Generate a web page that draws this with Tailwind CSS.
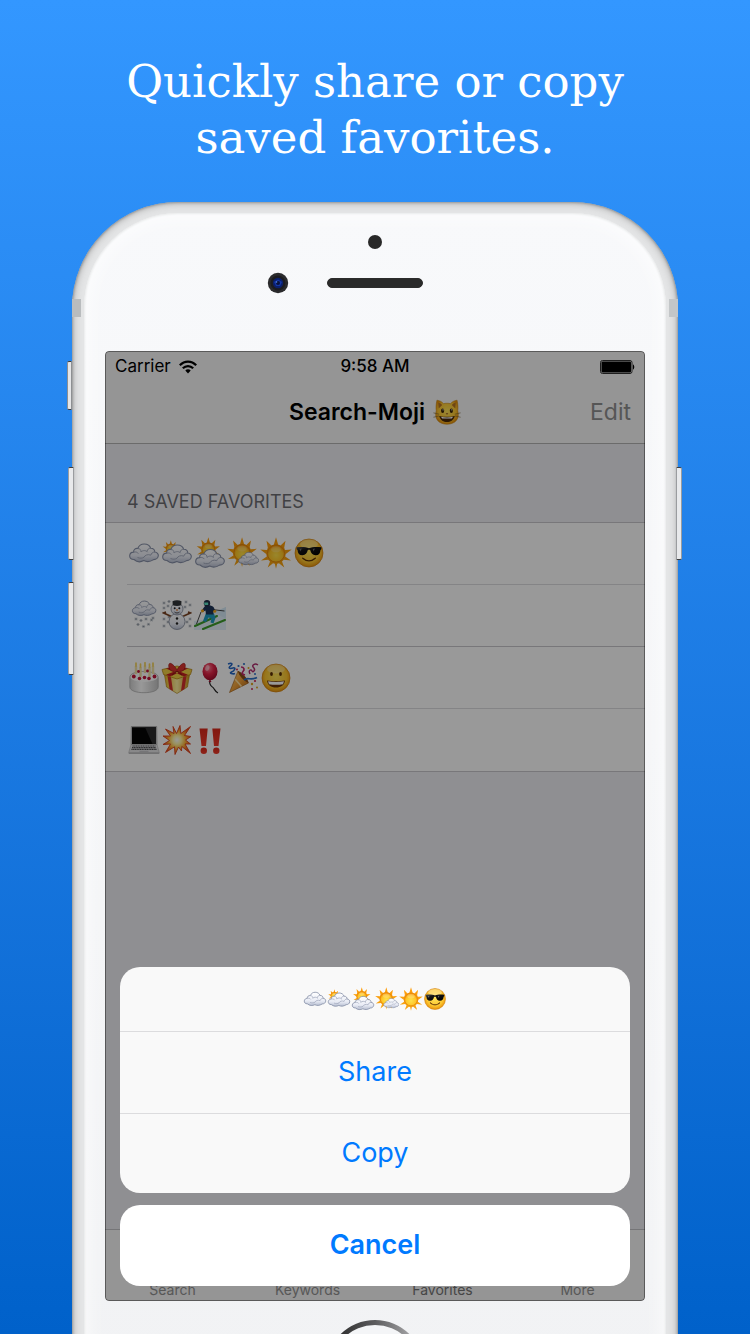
<!DOCTYPE html>
<html lang="en">
<head>
<meta charset="utf-8">
<meta name="viewport" content="width=device-width, initial-scale=1">
<title>Search-Moji</title>
<script src="https://cdn.jsdelivr.net/npm/@tailwindcss/browser@4"></script>
</head>
<body class="font-['Inter','Liberation_Sans',sans-serif]">

<!-- Shared emoji drawings -->
<svg class="absolute h-0 w-0" aria-hidden="true">
  <defs>
    <linearGradient id="gCloud" x1="0" y1="0" x2="0" y2="1"><stop offset="0" stop-color="#ffffff"/><stop offset=".65" stop-color="#e9ecf5"/><stop offset="1" stop-color="#b9c0d3"/></linearGradient>
    <radialGradient id="gSun" cx=".5" cy=".6" r=".55"><stop offset="0" stop-color="#ffe14a"/><stop offset=".7" stop-color="#ffc526"/><stop offset="1" stop-color="#f3920d"/></radialGradient>
    <linearGradient id="gRay" x1="0" y1="0" x2="0" y2="1"><stop offset="0" stop-color="#ff9d0a"/><stop offset="1" stop-color="#f5a413"/></linearGradient>
    <radialGradient id="gFace" cx=".5" cy=".45" r=".55"><stop offset="0" stop-color="#ffe45a"/><stop offset=".7" stop-color="#fdc62f"/><stop offset="1" stop-color="#e8920c"/></radialGradient>
    <linearGradient id="gLens" x1="0" y1="0" x2="1" y2="1"><stop offset="0" stop-color="#555"/><stop offset=".3" stop-color="#161616"/><stop offset="1" stop-color="#000"/></linearGradient>
    <linearGradient id="gBox" x1="0" y1="0" x2="1" y2="0"><stop offset="0" stop-color="#e6b41e"/><stop offset=".5" stop-color="#fff0a0"/><stop offset="1" stop-color="#c98d10"/></linearGradient>
    <radialGradient id="gBalloon" cx=".4" cy=".3" r=".7"><stop offset="0" stop-color="#ff7d93"/><stop offset=".5" stop-color="#e02447"/><stop offset="1" stop-color="#a30c2c"/></radialGradient>
    <linearGradient id="gCone" x1="0" y1="0" x2="1" y2="1"><stop offset="0" stop-color="#ffd47a"/><stop offset=".5" stop-color="#f2a23a"/><stop offset="1" stop-color="#a75d10"/></linearGradient>
    <radialGradient id="gBoom" cx=".5" cy=".5" r=".5"><stop offset="0" stop-color="#fff"/><stop offset=".3" stop-color="#fff3a0"/><stop offset=".6" stop-color="#ffb437"/><stop offset="1" stop-color="#e8501c"/></radialGradient>
    <linearGradient id="gBang" x1="0" y1="0" x2="0" y2="1"><stop offset="0" stop-color="#d92a1c"/><stop offset="1" stop-color="#ef3b2b"/></linearGradient>
    <linearGradient id="gCake" x1="0" y1="0" x2="1" y2="0"><stop offset="0" stop-color="#cfcfcf"/><stop offset=".4" stop-color="#fff"/><stop offset="1" stop-color="#c4c4c4"/></linearGradient>

    <g id="cloudShape">
      <path d="M6 23.500C2.800 23.500 1.500 21.500 1.700 19.600 1.900 17.400 3.700 16.200 5.600 16.100 5.400 13.600 7.600 12 9.800 12.500 10.900 9.500 13.300 8 16.200 8 19.400 8 21.900 9.600 22.600 12.200 25.400 12.100 27 14 26.700 16 29.200 16.200 30.500 17.900 30.300 19.800 30 22.300 28.100 23.500 25.600 23.600 22 26 18.400 26 15.800 24.600 12.800 26.200 8.700 26 6 23.500Z" fill="url(#gCloud)" stroke="#8790a8" stroke-width="1.100"/>
      <path d="M5.600 16.100C8 15.600 9.500 16.300 10.300 17.600M9.800 12.500C12 12.500 13.200 14 13 16M13 16C14.600 14.200 18 14 19.600 16.200M22.600 12.200C20.600 12.200 19.300 13.500 19.200 15.400M26.700 16C24.600 16 23.300 17.500 22.800 19.200 20 18 17 19 16 21.200M9.500 21.500C12 22.600 14.500 22.300 16 21.200" fill="none" stroke="#a3aabd" stroke-width="1"/>
    </g>
    <g id="sunShape">
      <path d="M16 .300 18.200 7.800 20.600 8.600 25.500 3.800 24.200 10.700 25 13 31.700 12.600 25.800 17 25.200 19.600 31 23.500 23.800 22.800 22 24.600 24.300 30.500 19 26.200 17.200 26.700 16 31.800 14.800 26.700 13 26.200 7.700 30.500 10 24.600 8.200 22.800 1 23.500 6.800 19.600 6.200 17 .300 12.600 7 13 7.800 10.700 6.500 3.800 11.400 8.600 13.800 7.800Z" fill="url(#gRay)"/>
      <circle cx="16" cy="16.500" r="8.600" fill="url(#gSun)" stroke="#e0830a" stroke-width=".9"/>
      <ellipse cx="16" cy="12.300" rx="5" ry="3" fill="#fff" opacity=".2"/>
    </g>
    <path id="flake" d="M-1.600 0H1.600M-.800-1.400.800 1.400M.800-1.400-.800 1.400" stroke="#77808f" stroke-width=".5" fill="none"/>

    <symbol id="e-cloud" viewBox="0 0 32 32"><use href="#cloudShape" transform="translate(0 -1)"/></symbol>
    <symbol id="e-cloud-sun" viewBox="0 0 32 32"><use href="#sunShape" transform="translate(1.500 3) scale(.52)"/><use href="#cloudShape"/></symbol>
    <symbol id="e-sun-cloud" viewBox="0 0 32 32"><use href="#sunShape" transform="translate(2.500 0) scale(.74)"/><use href="#cloudShape" transform="translate(0 4.500)"/></symbol>
    <symbol id="e-sun-small-cloud" viewBox="0 0 32 32"><use href="#sunShape" transform="translate(0 0) scale(.94)"/><use href="#cloudShape" transform="translate(10.500 9.700) scale(.7)"/></symbol>
    <symbol id="e-sun" viewBox="0 0 32 32"><use href="#sunShape"/></symbol>
    <symbol id="e-cool" viewBox="0 0 32 32">
      <circle cx="16" cy="16" r="14" fill="url(#gFace)" stroke="#cf7d0a" stroke-width=".7"/>
      <ellipse cx="16" cy="7" rx="9" ry="4.500" fill="#fff" opacity=".3"/>
      <path d="M3.500 10.300C8 9.600 13 9.800 16 11.200 19 9.800 24 9.600 28.500 10.300L28.300 12.300 27.500 13C27.200 16.500 25.800 18.200 22.600 18.200 19.400 18.200 18 16.300 17.300 13.300 16.500 12.700 15.500 12.700 14.700 13.300 14 16.300 12.600 18.200 9.400 18.200 6.200 18.200 4.800 16.500 4.500 13L3.700 12.300Z" fill="url(#gLens)"/>
      <path d="M6.500 12 8.700 11.500 7.500 14.500ZM19.800 12 22 11.500 20.500 14.500Z" fill="#8a8a8a" opacity=".7"/>
      <path d="M10.500 21.700C13.500 24.600 18.500 24.600 21.500 21.700M9.700 21.200l1.400.9M22.300 21.200l-1.400.9" fill="none" stroke="#5b3006" stroke-width="1.300" stroke-linecap="round"/>
    </symbol>
    <symbol id="e-snow" viewBox="0 0 32 32">
      <use href="#cloudShape" transform="translate(3 -4.500) scale(.82)"/>
      <use href="#flake" x="8" y="20"/><use href="#flake" x="13" y="21.500"/><use href="#flake" x="18" y="20"/><use href="#flake" x="23.500" y="21"/><use href="#flake" x="10" y="25.500"/><use href="#flake" x="15.500" y="27.500"/><use href="#flake" x="20.500" y="25.300"/><use href="#flake" x="25" y="19"/>
    </symbol>
    <symbol id="e-snowman" viewBox="0 0 32 32">
      <use href="#flake" x="3" y="4"/><use href="#flake" x="7" y="7"/><use href="#flake" x="8" y="2.500"/><use href="#flake" x="25" y="3"/><use href="#flake" x="29" y="6"/><use href="#flake" x="24" y="8"/><use href="#flake" x="3" y="20"/><use href="#flake" x="7" y="23"/><use href="#flake" x="3" y="27"/><use href="#flake" x="29" y="20"/><use href="#flake" x="26" y="23"/><use href="#flake" x="29" y="27"/><use href="#flake" x="3" y="9"/><use href="#flake" x="8" y="18"/>
      <path d="M11.500 18 1.500 13.500M4 12.500l.5 2.500M20.500 18 30.500 13.500M28 12.500l-.5 2.500" stroke="#7a4424" stroke-width="1.800" fill="none"/>
      <circle cx="16" cy="22.500" r="8" fill="url(#gCloud)" stroke="#8b92a2" stroke-width=".9"/>
      <circle cx="16" cy="10" r="6" fill="url(#gCloud)" stroke="#8b92a2" stroke-width=".9"/>
      <path d="M11.500 2.300C14 1 18 1 20.500 2.300L20.200 6.200C17.500 7.200 14.500 7.200 11.800 6.200Z" fill="#33363a"/>
      <circle cx="13.700" cy="9.300" r="1" fill="#222"/><circle cx="18.300" cy="9.300" r="1" fill="#222"/>
      <path d="M16 10v2" stroke="#e26a13" stroke-width="1.100"/><path d="M13.500 13C15 14.300 17 14.300 18.500 13" stroke="#333" stroke-width=".8" fill="none"/>
      <circle cx="16" cy="19.500" r="1.200" fill="#222"/><circle cx="16" cy="24.500" r="1.200" fill="#222"/>
    </symbol>
    <symbol id="e-skier" viewBox="0 0 32 32">
      <path d="M0 22 12 20.500 20 14 32 8V31H0Z" fill="#e3f1fa"/><path d="M20 13 32 8V20Z" fill="#d5eaf7"/>
      <path d="M1 27 23 17M9 30 31 21" stroke="#3d9b2b" stroke-width="2" stroke-linecap="round"/>
      <path d="M18 10.500 30.500 12M7 13 2.500 25" stroke="#333" stroke-width=".9"/>
      <path d="M12 14 20 14.500 21.500 19 19.500 24.500 16.500 23.500 17.500 19.500 14.500 18.500 12 23 9 22Z" fill="#1f9cc4"/>
      <path d="M11 7C13 5.500 17.500 6 19.500 8L21.500 12 19.500 12.500 19.500 15.500 12 15.500 11.500 11.500 9.500 12.500 8 11Z" fill="#1f3458"/>
      <circle cx="13" cy="4.200" r="3.200" fill="#202d47"/><path d="M10 3.600h4.200v2.500H10.500Z" fill="#5cdcc0"/>
      <circle cx="8.500" cy="11.800" r="1.600" fill="#efa41b"/><circle cx="20.700" cy="12.200" r="1.500" fill="#efa41b"/>
    </symbol>
    <symbol id="e-cake" viewBox="0 0 32 32">
      <path d="M1.800 15.500C1.800 11.500 8 9.500 16 9.500S30.200 11.500 30.200 15.500V25C30.200 28.500 24 30.700 16 30.700S1.800 28.500 1.800 25Z" fill="url(#gCake)" stroke="#a8a8a8" stroke-width=".7"/>
      <ellipse cx="16" cy="15" rx="13.500" ry="5" fill="#fff"/>
      <path d="M8 4V12M12.500 5V15M17 3.500V11M21.500 5V15M25 4V12" stroke="#f1e1a6" stroke-width="2.400"/>
      <path d="M8 1.200V4M12.500 2V5M17 .800V4M21.500 2V5M25 1.200V4" stroke="#f5d35c" stroke-width="1.700" stroke-linecap="round"/>
      <g fill="#c2143a"><circle cx="5.800" cy="14.500" r="1.900"/><circle cx="11.500" cy="16.500" r="1.800"/><circle cx="16.500" cy="15.500" r="1.800"/><circle cx="21" cy="16.500" r="1.800"/><circle cx="26.500" cy="14.500" r="1.900"/><circle cx="10.500" cy="9.500" r="1.400"/><circle cx="19.500" cy="9" r="1.400"/></g>
    </symbol>
    <symbol id="e-gift" viewBox="0 0 32 32">
      <path d="M3 10 16 14 29 10 26.500 25 16 31.500 5.500 25Z" fill="url(#gBox)" stroke="#a87a10" stroke-width=".6"/>
      <path d="M1 7.500 16 4 31 7.500 29.500 12.500 16 17 2.500 12.500Z" fill="#f1cf45" stroke="#ad7c10" stroke-width=".7"/>
      <path d="M6.500 14 10 15.200 12 29 8.500 27ZM25.500 14 22 15.200 20 29 23.500 27Z" fill="#d3302c"/>
      <path d="M5 6.600 9 5.700 27 12.800 23 14.500ZM27 6.600 23 5.700 5 12.800 9 14.500Z" fill="#c4211f"/>
      <path d="M16 8C13 2.500 9 0 8 2 7 4.500 8.500 7.500 10.500 9L16 9.500 21.500 9C23.500 7.500 25 4.500 24 2 23 0 19 2.500 16 8Z" fill="#dd3530" stroke="#931414" stroke-width=".6"/>
      <path d="M16 9 11 13M16 9 21 13" stroke="#981818" stroke-width="1.300"/>
    </symbol>
    <symbol id="e-balloon" viewBox="0 0 32 32">
      <path d="M16 18.500C14.500 23 17.500 24 19.500 26 21 28 21.500 30 24 31" fill="none" stroke="#222" stroke-width="1.200"/>
      <ellipse cx="16" cy="9.500" rx="7.500" ry="8.700" fill="url(#gBalloon)"/><path d="M14.500 20 16 17.500 17.500 20Z" fill="#a30c2c"/>
      <ellipse cx="13.300" cy="6" rx="2" ry="3" fill="#fff" opacity=".45" transform="rotate(20 13.300 6)"/>
    </symbol>
    <symbol id="e-party" viewBox="0 0 32 32">
      <path d="M11 9 2.500 30.500 21.500 21Z" fill="url(#gCone)" stroke="#9c5a16" stroke-width=".6"/>
      <path d="M11 9C14 9.500 21.500 17 21.500 21 18 20 11 13 11 9Z" fill="#8a4b16"/><path d="M8 17 14.500 24.500" stroke="#ffe1a0" stroke-width="1.600"/>
      <path d="M1 2C5 .5 6 2 3.500 4S2.500 7 6 6 7.500 9 4.500 10 6 12.500 8 11.500" fill="none" stroke="#2567c4" stroke-width="1.600"/>
      <path d="M14 5C17 5 18 7.500 16 9.500S16 12.500 18 13" fill="none" stroke="#c1276d" stroke-width="1.700"/>
      <path d="M23 12C21 8 24 7 25 9S29 8 26.500 5.500 28 1 31 3" fill="none" stroke="#b0306f" stroke-width="1.500"/>
      <path d="M17 18C21 14.500 23 19 30 15.500" fill="none" stroke="#2d72c8" stroke-width="1.700"/>
      <g fill="#2d72c8"><circle cx="11.500" cy="4" r="1.100"/><circle cx="17" cy="2" r="1.100"/><circle cx="28" cy="12" r="1"/></g><g fill="#cf2b55"><circle cx="28" cy="19" r="1.100"/><circle cx="25" cy="27" r="1"/><circle cx="10" cy="7.500" r="1"/></g><g fill="#e0a722"><circle cx="25" cy="22" r="1.200"/><circle cx="30" cy="25.500" r="1"/><circle cx="21.500" cy="6" r="1"/></g>
    </symbol>
    <symbol id="e-grin" viewBox="0 0 32 32">
      <circle cx="16" cy="16" r="14" fill="url(#gFace)" stroke="#cf7d0a" stroke-width=".7"/>
      <ellipse cx="16" cy="7" rx="9" ry="4.500" fill="#fff" opacity=".3"/>
      <ellipse cx="11.500" cy="12" rx="1.400" ry="2" fill="#5b3006"/><ellipse cx="20.500" cy="12" rx="1.400" ry="2" fill="#5b3006"/>
      <path d="M7 18.500C12 19.500 20 19.500 25 18.500 24.500 23 21 25.500 16 25.500S7.500 23 7 18.500Z" fill="#6b3409"/>
      <path d="M8 19.300C13 20.300 19 20.300 24 19.300L23 22.200C18.500 23 13.500 23 9 22.200Z" fill="#fff"/>
    </symbol>
    <symbol id="e-laptop" viewBox="0 0 32 32">
      <path d="M3.300 2.500H28.700L29 20.500H3Z" fill="#d7d7d9" stroke="#777" stroke-width=".5"/><path d="M4 3.200H28V20H4Z" fill="#060606"/><path d="M17 3.200H28V20H24.500Z" fill="#2a2a2c"/>
      <path d="M3 20.500H29L31.300 28.500H.7Z" fill="#e3e3e5" stroke="#999" stroke-width=".4"/><path d="M4.500 22H27.500M4 23.700H28M3.400 25.400H28.600" stroke="#4d4d50" stroke-width="1.200" stroke-dasharray="1.300 .4"/><path d="M11.500 26.800H20.500V28.500H11.500Z" fill="#c5c5c8"/><path d="M.7 28.500H31.300V30H.7Z" fill="#bcbcbf"/>
    </symbol>
    <symbol id="e-boom" viewBox="0 0 32 32">
      <path d="M15.500 9.500 19 1.500 19.800 9.500 29.500 2.500 23.500 11.500 30 12.500 24.500 16 29.500 20 24 20 29.500 29.500 20.800 22.500 20.500 27 17.500 23 14 30.500 13.500 22.800 4.500 28.500 9.500 20 2 20.500 8.500 16.500 2 12 9.500 12 4.500 5 13 9.500 12 2.500Z" fill="url(#gBoom)" stroke="#d9401c" stroke-width=".9"/>
    </symbol>
    <symbol id="e-bang" viewBox="0 0 32 32">
      <g fill="url(#gBang)"><path d="M5.500 4.500H13.700L12 22H7.500ZM18.300 4.500H26.500L24.500 22H20Z"/><circle cx="9.800" cy="26.800" r="3.200"/><circle cx="22.300" cy="26.800" r="3.200"/></g>
    </symbol>
    <symbol id="e-cat" viewBox="0 0 32 32">
      <path d="M4.500 2.500C8 3 10.500 4.500 12 6.500 14.500 5.800 17.500 5.800 20 6.500 21.500 4.500 24 3 27.500 2.500 28.500 7 28.800 11 28.300 14.500 31 24 25 30 16 30S1 24 3.700 14.500C3.200 11 3.500 7 4.500 2.500Z" fill="url(#gFace)" stroke="#c2800e" stroke-width=".6"/>
      <path d="M6 5C8 5.500 9.500 6.500 10.500 8L6.500 12ZM26 5C24 5.500 22.500 6.500 21.500 8L25.500 12Z" fill="#b87424"/>
      <ellipse cx="11" cy="14.500" rx="1.800" ry="2.600" fill="#3a2505"/><ellipse cx="21" cy="14.500" rx="1.800" ry="2.600" fill="#3a2505"/><circle cx="11.500" cy="13.500" r=".7" fill="#fff"/><circle cx="21.500" cy="13.500" r=".7" fill="#fff"/>
      <path d="M14.500 17.300H17.500L16 19.200Z" fill="#8a4c20"/>
      <path d="M7 20.500C12 21.800 20 21.800 25 20.500 23.500 25.500 20 27.500 16 27.500S8.500 25.500 7 20.500Z" fill="#4a2908"/><path d="M9 21.500C13 22.400 19 22.400 23 21.500L21.500 23.400H10.500Z" fill="#fff"/>
      <path d="M7 18.500.5 17M7 20.500.5 22M25 18.500 31.500 17M25 20.500 31.500 22" stroke="#7b6330" stroke-width=".7"/>
    </symbol>
  </defs>
</svg>

<main class="flex h-screen flex-col overflow-hidden bg-linear-to-b from-[#3397ff] to-[#0061ca] px-[72px] pt-[54px]">
  <h1 class="-mx-8 h-[148px] shrink-0 text-center font-['DejaVu_Serif',serif] text-[45px] leading-[56px] text-white">Quickly share or copy<br>saved favorites.</h1>

  <!-- Phone -->
  <div class="relative w-full shrink-0 rounded-t-[106px] bg-[#e4e5e6] px-3 pt-[11px] shadow-[inset_0_0_3px_#777,inset_0_0_9px_#999]">
    <!-- Antenna bands -->
    <div class="absolute top-[97px] left-0 h-[18px] w-[9px] bg-[#b9bcbe]"></div>
    <div class="absolute top-[97px] right-0 h-[18px] w-[9px] bg-[#c3c6c8]"></div>
    <!-- Side keys -->
    <div class="absolute top-[159px] -left-[5px] h-[49px] w-[5px] rounded-l-xs border border-x-[#8d8f92] border-y-[#3c3d3f] bg-[#e4e5e7]"></div>
    <div class="absolute top-[265px] -left-1 h-[93px] w-[6px] rounded-l-xs border border-x-[#9a9c9f] border-y-[#3c3d3f] bg-[#e8e9eb]"></div>
    <div class="absolute top-[380px] -left-1 h-[93px] w-[6px] rounded-l-xs border border-x-[#9a9c9f] border-y-[#3c3d3f] bg-[#e8e9eb]"></div>
    <div class="absolute top-[265px] -right-1 h-[93px] w-[6px] rounded-r-xs border border-x-[#9a9c9f] border-y-[#3c3d3f] bg-[#e8e9eb]"></div>

    <div class="rounded-t-[94px] bg-linear-to-b from-[#f8f9fb] to-[#f1f2f4] px-[21px] shadow-[inset_0_0_3px_#d8dada,inset_0_0_24px_#ffffff]">
      <!-- Sensor, camera and speaker -->
      <div class="flex h-[138px] flex-col items-center pt-[22px]">
        <div class="h-[14px] w-[14px] rounded-full bg-[#282828]"></div>
        <div class="mt-[23px] grid w-full grid-cols-[1fr_auto_1fr] items-center">
          <svg class="mr-[38px] h-[22px] w-[22px] justify-self-end" viewBox="0 0 22 22" aria-hidden="true">
            <circle cx="11" cy="11" r="10.200" fill="#2b2b2d"/><circle cx="11" cy="11" r="7.500" fill="#1c1c20"/><circle cx="11" cy="11" r="5.200" fill="#0b1f6b"/><path d="M7 10 11 7.500 15 10 13 14H9Z" fill="#1536a4"/><circle cx="11" cy="11" r="2" fill="#09123c"/><circle cx="9.500" cy="10" r=".8" fill="#5b8cf0"/>
          </svg>
          <div class="h-[10px] w-24 rounded-full border border-[#2c2c2c] bg-[#444] bg-[radial-gradient(#2a2a2a_1px,transparent_1px)] bg-size-[2px_2px]"></div>
        </div>
      </div>

      <!-- Screen -->
      <div class="relative flex aspect-[540/950] w-full flex-col overflow-hidden rounded-[4px] bg-[#efeff4]">
        <header class="flex flex-col border-b border-[#b2b2b2] bg-[#f8f8f8]">
          <div class="grid h-8 grid-cols-3 items-center px-[10px] text-[17px] text-black">
            <div class="flex items-center gap-2">
              <span>Carrier</span>
              <svg class="h-[14px] w-[18px]" viewBox="0 0 18 14" aria-label="Wi-Fi" role="img"><g fill="none" stroke="#000" stroke-width="2.200"><path d="M.800 5.200C5.500.300 12.500.300 17.200 5.200"/><path d="M3.800 8.300C6.800 5.300 11.200 5.300 14.200 8.300"/></g><path d="M6.300 10.400C7.800 9 10.200 9 11.700 10.400L9 13.500Z"/></svg>
            </div>
            <span class="text-center font-medium">9:58 AM</span>
            <svg class="h-[14px] w-[35px] justify-self-end" viewBox="0 0 35 14" aria-label="Battery full" role="img"><rect x=".5" y=".5" width="31.500" height="13" rx="2" fill="none" stroke="#333"/><rect x="1.500" y="1.500" width="29.500" height="11" rx="1"/><path d="M33 4.500C34.700 5 34.700 9 33 9.500Z"/></svg>
          </div>
          <div class="grid h-[60px] grid-cols-[1fr_auto_1fr] items-center px-[14px] pb-[2px]">
            <h2 class="col-start-2 flex items-center gap-2 text-[23px] font-semibold text-black">Search-Moji <svg class="h-7 w-7" aria-hidden="true"><use href="#e-cat"/></svg></h2>
            <button type="button" class="justify-self-end text-[23px] text-[#8f8f8f]">Edit</button>
          </div>
        </header>

        <section>
          <h3 class="flex h-[78px] items-end px-[22px] pb-[8px] text-lg leading-6 text-[#6d6d72]">4 SAVED FAVORITES</h3>
          <ul class="border-y border-[#c8c7cc] bg-white pl-[22px] [&_svg]:h-8 [&_svg]:w-8">
            <li class="flex h-[62px] items-center gap-px border-b border-[#dcdcdf] pb-[2px] pl-px" aria-label="Weather">
              <svg><use href="#e-cloud"/></svg><svg><use href="#e-cloud-sun"/></svg><svg><use href="#e-sun-cloud"/></svg><svg><use href="#e-sun-small-cloud"/></svg><svg><use href="#e-sun"/></svg><svg><use href="#e-cool"/></svg>
            </li>
            <li class="flex h-[62px] items-center gap-px border-b border-[#c8c7cc] pb-[2px] pl-px" aria-label="Winter">
              <svg><use href="#e-snow"/></svg><svg><use href="#e-snowman"/></svg><svg><use href="#e-skier"/></svg>
            </li>
            <li class="flex h-[62px] items-center gap-px border-b border-[#dcdcdf] pl-px" aria-label="Party">
              <svg><use href="#e-cake"/></svg><svg><use href="#e-gift"/></svg><svg><use href="#e-balloon"/></svg><svg><use href="#e-party"/></svg><svg><use href="#e-grin"/></svg>
            </li>
            <li class="flex h-[62px] items-center gap-px pl-px" aria-label="Crash">
              <svg><use href="#e-laptop"/></svg><svg><use href="#e-boom"/></svg><svg><use href="#e-bang"/></svg>
            </li>
          </ul>
        </section>

        <nav class="mt-auto grid h-[72px] grid-cols-4 items-end border-t border-[#c4c4c6] bg-[#f8f8f8] pb-[3px] text-center text-sm leading-4 text-[#929292]">
          <a href="#search">Search</a>
          <a href="#keywords">Keywords</a>
          <a href="#favorites" class="text-[#757575]" aria-current="page">Favorites</a>
          <a href="#more">More</a>
        </nav>

        <!-- Dimmed backdrop with action sheet -->
        <div class="absolute inset-0 flex flex-col justify-end gap-3 rounded-[4px] border border-black/40 bg-black/40 p-[14px] text-[27px] text-[#007aff]" role="dialog" aria-label="Favorite actions">
          <div class="overflow-hidden rounded-[20px] bg-[#f9f9f9]">
            <div class="flex h-16 items-center justify-center [&_svg]:h-6 [&_svg]:w-6">
              <svg><use href="#e-cloud"/></svg><svg><use href="#e-cloud-sun"/></svg><svg><use href="#e-sun-cloud"/></svg><svg><use href="#e-sun-small-cloud"/></svg><svg><use href="#e-sun"/></svg><svg><use href="#e-cool"/></svg>
            </div>
            <button type="button" class="block h-[82px] w-full border-t border-[#dcdcde]">Share</button>
            <button type="button" class="block h-20 w-full border-t border-[#dcdcde]">Copy</button>
          </div>
          <button type="button" class="h-[81px] w-full rounded-[20px] bg-white font-semibold">Cancel</button>
        </div>
      </div>

      <!-- Home button -->
      <div class="flex justify-center pt-[19px] pb-6">
        <div class="h-[98px] w-[98px] rounded-full bg-linear-to-r from-[#222] via-[#5c5c5e] to-[#c0c0c2] p-[5px]"><div class="h-full w-full rounded-full bg-[#f4f5f7]"></div></div>
      </div>
    </div>
  </div>
</main>
</body>
</html>
